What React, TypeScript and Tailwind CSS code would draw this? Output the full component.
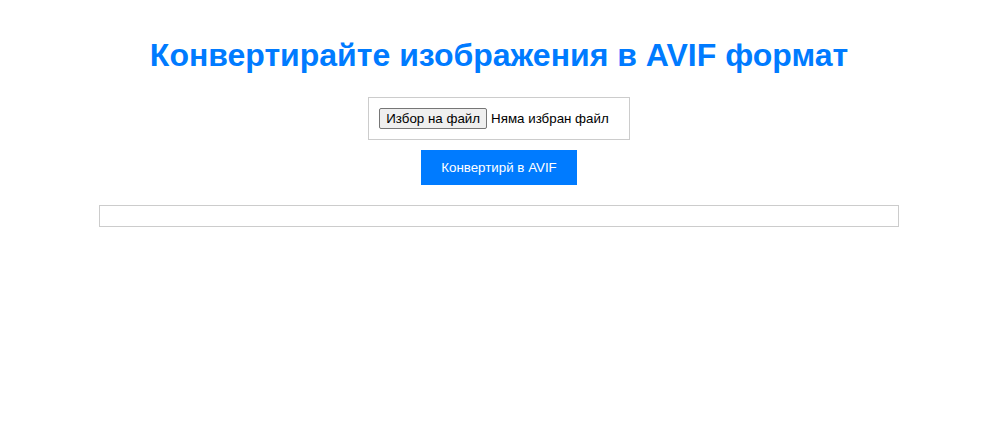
import React from "react";

export default function App() {
  return (
    <div
      className="w-full min-h-[444px] bg-white pl-[14px] pt-[37px] flex flex-col items-center text-black"
      style={{ fontFamily: '"Liberation Sans", Arial, sans-serif' }}
    >
      <h1 className="text-[32px] leading-[37px] font-bold text-[#007bff] m-0">
        Конвертирайте изображения в AVIF формат
      </h1>
      <div className="mt-[23px] border border-[#cccccc] pl-[10px] pr-[20px] py-[10px] flex items-center h-[43px]">
        <button className="h-[21px] px-[6px] text-[13.33px] leading-[15px] bg-[#efefef] border border-[#767676] rounded-[2px] text-black">
          Избор на файл
        </button>
        <span className="ml-[4px] text-[13.33px] leading-[15px]">Няма избран файл</span>
      </div>
      <button className="mt-[10px] h-[35px] w-[156px] bg-[#007bff] text-white text-[13.33px] flex items-center justify-center">
        Конвертирй в AVIF
      </button>
      <div className="mt-[20px] w-[800px] h-[22px] border border-[#cccccc]"></div>
    </div>
  );
}
